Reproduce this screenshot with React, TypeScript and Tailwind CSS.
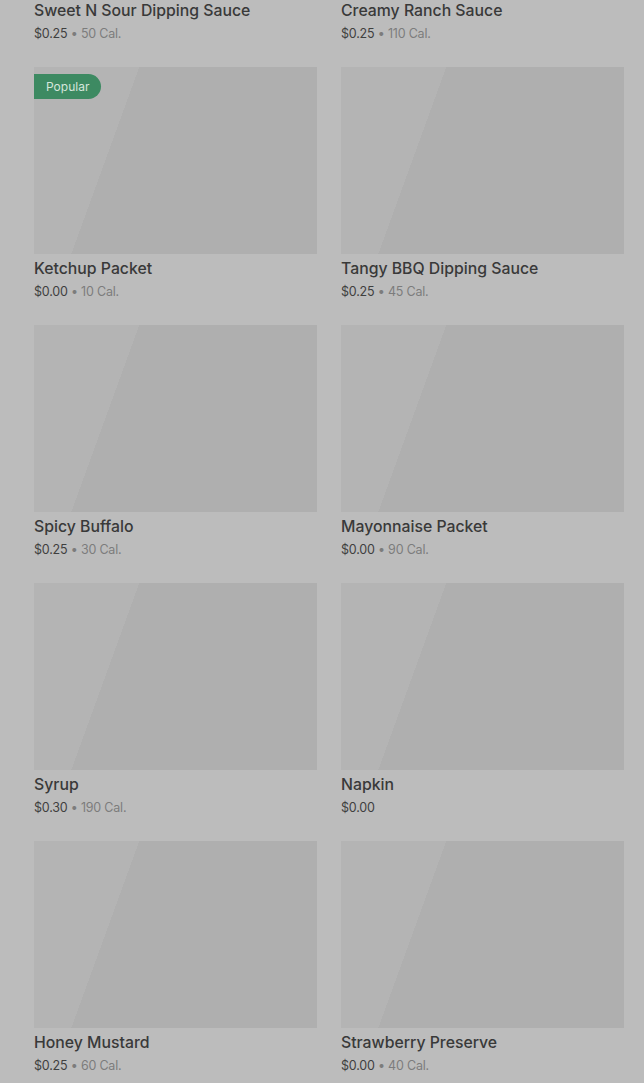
const items = [
  { name: 'Sweet N Sour Dipping Sauce', price: '$0.25', cal: '50 Cal.' },
  { name: 'Creamy Ranch Sauce', price: '$0.25', cal: '110 Cal.' },
  { name: 'Ketchup Packet', price: '$0.00', cal: '10 Cal.', popular: true },
  { name: 'Tangy BBQ Dipping Sauce', price: '$0.25', cal: '45 Cal.' },
  { name: 'Spicy Buffalo', price: '$0.25', cal: '30 Cal.' },
  { name: 'Mayonnaise Packet', price: '$0.00', cal: '90 Cal.' },
  { name: 'Syrup', price: '$0.30', cal: '190 Cal.' },
  { name: 'Napkin', price: '$0.00' },
  { name: 'Honey Mustard', price: '$0.25', cal: '60 Cal.' },
  { name: 'Strawberry Preserve', price: '$0.00', cal: '40 Cal.' },
];

type Item = { name: string; price: string; cal?: string; popular?: boolean };

function Card({ item }: { item: Item }) {
  return (
    <div className="flex flex-col">
      <div className="relative h-[187px] bg-[linear-gradient(110deg,#b4b4b4_30%,#afafaf_30%)]">
        {item.popular && (
          <span className="absolute left-0 top-[7px] flex h-[25px] items-center rounded-r-full bg-[#3d8a62] px-3 text-[12px] text-[#d5e6dc]">
            Popular
          </span>
        )}
      </div>
      <div className="mt-[5px] text-[15.8px] font-medium leading-5 text-[#393939]">{item.name}</div>
      <div className="mt-[3px] text-[12.5px] leading-5 tracking-[-0.2px] text-[#3f3f3f]">
        {item.price}
        <span className="text-[#7c7c7c]">{item.cal ? ` • ${item.cal}` : ''}</span>
      </div>
    </div>
  );
}

export default function App() {
  return (
    <div className="h-[1083px] overflow-hidden bg-[#bcbcbc] font-['Inter',sans-serif]">
      <div className="-mt-[191px] grid grid-cols-2 gap-x-6 gap-y-[23px] pl-[34px] pr-5">
        {items.map((item) => (
          <Card key={item.name} item={item} />
        ))}
      </div>
    </div>
  );
}
